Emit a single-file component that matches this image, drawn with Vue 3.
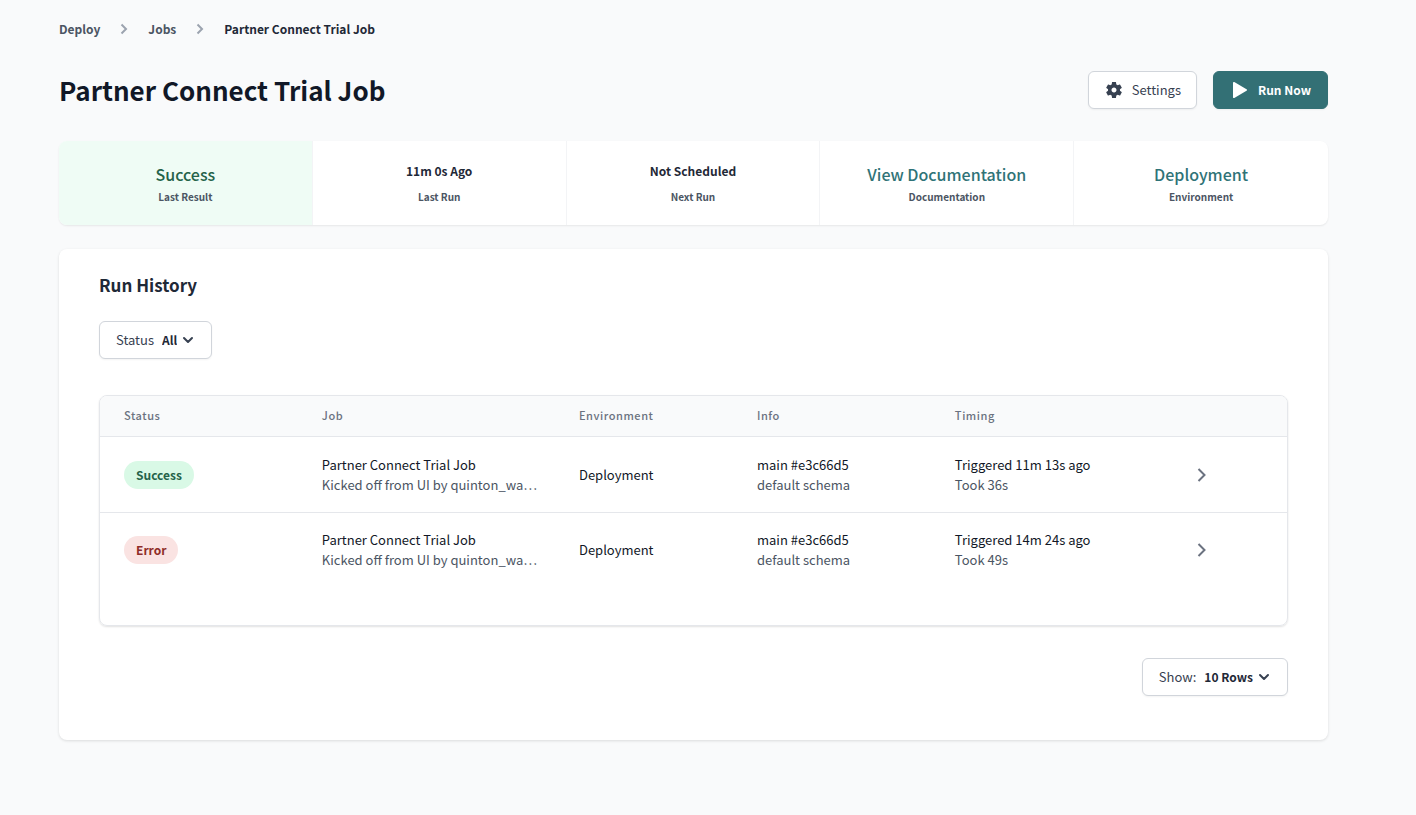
<script setup>
import { ref } from 'vue'

const stats = [
  { value: 'Success', label: 'Last Result', kind: 'success' },
  { value: '11m 0s Ago', label: 'Last Run', kind: 'plain' },
  { value: 'Not Scheduled', label: 'Next Run', kind: 'plain' },
  { value: 'View Documentation', label: 'Documentation', kind: 'link' },
  { value: 'Deployment', label: 'Environment', kind: 'link' },
]

const columns = ['Status', 'Job', 'Environment', 'Info', 'Timing']

const runs = [
  { id: 1, status: 'Success', triggered: 'Triggered 11m 13s ago', took: 'Took 36s' },
  { id: 2, status: 'Error', triggered: 'Triggered 14m 24s ago', took: 'Took 49s' },
]

const status = ref('All')
const rows = ref('10 Rows')
</script>

<template>
  <main class="page">
    <nav class="crumbs" aria-label="Breadcrumb">
      <a href="#">Deploy</a>
      <svg class="crumb-sep" viewBox="0 0 20 20" aria-hidden="true"><path d="M7.500 5.500l4.500 4.500-4.500 4.500" /></svg>
      <a href="#">Jobs</a>
      <svg class="crumb-sep" viewBox="0 0 20 20" aria-hidden="true"><path d="M7.500 5.500l4.500 4.500-4.500 4.500" /></svg>
      <a href="#" class="current" aria-current="page">Partner Connect Trial Job</a>
    </nav>

    <header class="heading">
      <h1>Partner Connect Trial Job</h1>
      <div class="actions">
        <button type="button" class="btn">
          <svg class="btn-icon" viewBox="0 0 24 24" aria-hidden="true"><path d="M19.14 12.94c.04-.3.06-.61.06-.94 0-.32-.02-.64-.07-.94l2.03-1.58c.18-.14.23-.41.12-.61l-1.92-3.32c-.12-.22-.37-.29-.59-.22l-2.39.96c-.5-.38-1.03-.7-1.62-.94l-.36-2.54c-.04-.24-.24-.41-.48-.41h-3.84c-.24 0-.43.17-.47.41l-.36 2.54c-.59.24-1.13.57-1.62.94l-2.39-.96c-.22-.08-.47 0-.59.22L2.74 8.870c-.12.21-.08.47.12.61l2.03 1.58c-.05.3-.09.63-.09.94s.02.64.07.94l-2.030 1.580c-.18.14-.23.41-.12.61l1.920 3.320c.12.22.37.29.59.22l2.390-.960c.5.38 1.030.7 1.620.940l.360 2.540c.050.240.240.410.480.410h3.840c.240 0 .440-.170.470-.410l.360-2.540c.590-.240 1.130-.560 1.620-.940l2.390.960c.220.080.470 0 .590-.220l1.920-3.320c.120-.220.070-.470-.120-.610l-2.010-1.580zM12 15c-1.650 0-3-1.350-3-3s1.350-3 3-3 3 1.350 3 3-1.350 3-3 3z" /></svg>
          Settings
        </button>
        <button type="button" class="btn primary">
          <svg class="btn-icon" viewBox="0 0 20 20" aria-hidden="true"><path d="M3 2.800C3 2 3.700 1.700 4.300 2.100l12.200 7.100c.700.400.700 1.200 0 1.600L4.300 17.900c-.600.400-1.300.100-1.300-.700z" /></svg>
          Run Now
        </button>
      </div>
    </header>

    <section class="stats" aria-label="Job summary">
      <div v-for="s in stats" :key="s.label" class="stat" :class="s.kind">
        <a v-if="s.kind === 'link'" href="#" class="stat-value">{{ s.value }}</a>
        <span v-else class="stat-value">{{ s.value }}</span>
        <span class="stat-label">{{ s.label }}</span>
      </div>
    </section>

    <section class="card">
      <h2>Run History</h2>
      <label class="picker">
        <span>Status</span>
        <select v-model="status">
          <option>All</option>
          <option>Success</option>
          <option>Error</option>
        </select>
        <svg class="caret" viewBox="0 0 12 12" aria-hidden="true"><path d="M2 4l4 4 4-4" /></svg>
      </label>

      <div class="table-box">
        <table>
          <colgroup>
            <col class="c-status" /><col class="c-job" /><col class="c-env" />
            <col class="c-info" /><col class="c-timing" /><col class="c-open" />
          </colgroup>
          <thead>
            <tr>
              <th v-for="c in columns" :key="c" scope="col">{{ c }}</th>
              <th aria-label="Open"></th>
            </tr>
          </thead>
          <tbody>
            <tr v-for="r in runs" :key="r.id">
              <td><span class="badge" :class="r.status.toLowerCase()">{{ r.status }}</span></td>
              <td>
                <div>Partner Connect Trial Job</div>
                <div class="sub">Kicked off from UI by quinton_wa…</div>
              </td>
              <td>Deployment</td>
              <td>
                <div>main #e3c66d5</div>
                <div class="sub">default schema</div>
              </td>
              <td>
                <div>{{ r.triggered }}</div>
                <div class="sub">{{ r.took }}</div>
              </td>
              <td>
                <a href="#" class="open" aria-label="Open run">
                  <svg viewBox="0 0 20 20" aria-hidden="true"><path d="M6.500 4l6 6-6 6" /></svg>
                </a>
              </td>
            </tr>
          </tbody>
        </table>
      </div>

      <div class="pager">
        <label class="picker">
          <span>Show:</span>
          <select v-model="rows">
            <option>10 Rows</option>
            <option>25 Rows</option>
            <option>50 Rows</option>
          </select>
          <svg class="caret" viewBox="0 0 12 12" aria-hidden="true"><path d="M2 4l4 4 4-4" /></svg>
        </label>
      </div>
    </section>
  </main>
</template>

<style>
body {
  background: #f9fafb;
}
</style>

<style scoped>
.page {
  box-sizing: border-box;
  padding: 19px 88px 72px 59px;
  font-family: "Noto Sans CJK SC", "Noto Sans", sans-serif;
  font-size: 13px;
  line-height: 20px;
  color: #111827;
}
a {
  color: inherit;
  text-decoration: none;
}
.crumbs {
  display: flex;
  align-items: center;
  font-size: 12px;
  font-weight: 700;
  color: #4b5563;
}
.crumb-sep {
  width: 20px;
  height: 20px;
  margin: 0 14px;
  fill: none;
  stroke: #9ca3af;
  stroke-width: 2;
}
.current {
  color: #1f2937;
}
.heading {
  display: flex;
  align-items: center;
  justify-content: space-between;
  margin-top: 32px;
}
h1 {
  margin: 0;
  font-size: 26px;
  line-height: 36px;
  font-weight: 700;
}
.actions {
  display: flex;
  gap: 16px;
}
.btn {
  display: flex;
  align-items: center;
  gap: 8px;
  height: 38px;
  padding: 0 15px;
  border: 1px solid #d1d5db;
  border-radius: 6px;
  background: #fff;
  box-shadow: 0 1px 2px rgba(0, 0, 0, 0.05);
  font: inherit;
  color: #374151;
}
.btn-icon {
  width: 20px;
  height: 20px;
  fill: #374151;
}
.primary {
  padding: 0 16px;
  border-color: #337075;
  background: #337075;
  color: #fff;
  font-size: 12px;
  font-weight: 700;
}
.primary .btn-icon {
  fill: #fff;
}
.stats {
  display: grid;
  grid-template-columns: repeat(5, 1fr);
  margin-top: 32px;
  border-radius: 8px;
  background: #fff;
  box-shadow: 0 1px 2px rgba(0, 0, 0, 0.08);
  overflow: hidden;
}
.stat {
  display: flex;
  flex-direction: column;
  align-items: center;
  padding: 19px 8px 20px;
  border-right: 1px solid #f3f4f6;
  font-weight: 700;
}
.stat:last-child {
  border-right: 0;
}
.stat-value {
  height: 29px;
  font-size: 12px;
  line-height: 22px;
  color: #1f2937;
}
.stat.success {
  background: #effcf5;
}
.success .stat-value,
.link .stat-value {
  font-size: 16px;
  line-height: 28px;
  font-weight: 500;
}
.success .stat-value {
  color: #25634a;
}
.link .stat-value {
  color: #2f7377;
}
.stat-label {
  font-size: 10px;
  line-height: 16px;
  color: #4b5563;
}
.card {
  margin-top: 24px;
  padding: 20px 40px 44px;
  border-radius: 8px;
  background: #fff;
  box-shadow: 0 1px 3px rgba(0, 0, 0, 0.12);
}
h2 {
  margin: 0 0 20px;
  font-size: 17px;
  line-height: 32px;
  font-weight: 700;
  color: #1f2937;
}
.picker {
  box-sizing: border-box;
  display: inline-flex;
  align-items: center;
  height: 38px;
  padding: 0 17px 0 16px;
  border: 1px solid #d1d5db;
  border-radius: 6px;
  background: #fff;
  box-shadow: 0 1px 2px rgba(0, 0, 0, 0.05);
  color: #374151;
  vertical-align: top;
}
.picker select {
  appearance: none;
  field-sizing: content;
  margin: 0 5px 0 8px;
  padding: 0;
  border: 0;
  background: none;
  font: inherit;
  font-size: 12px;
  font-weight: 700;
  color: #1f2937;
}
.caret {
  width: 12px;
  height: 12px;
  fill: none;
  stroke: #374151;
  stroke-width: 2;
  stroke-linecap: round;
  stroke-linejoin: round;
}
.table-box {
  margin-top: 36px;
  padding-bottom: 38px;
  border: 1px solid #e5e7eb;
  border-radius: 8px;
  box-shadow: 0 1px 2px rgba(0, 0, 0, 0.12);
  overflow: hidden;
}
table {
  width: 100%;
  table-layout: fixed;
  border-spacing: 0;
}
.c-status,
.c-info {
  width: 16.67%;
}
.c-job {
  width: 21.66%;
}
.c-env {
  width: 15%;
}
.c-timing {
  width: 20%;
}
.c-open {
  width: 10%;
}
th {
  height: 38px;
  padding: 0 24px 2px;
  background: #f9fafb;
  font-size: 11px;
  line-height: 16px;
  font-weight: 500;
  letter-spacing: 0.05em;
  text-align: left;
  color: #6b7280;
}
td {
  padding: 18px 24px 17px;
  border-top: 1px solid #e5e7eb;
  white-space: nowrap;
}
tr:last-child td {
  padding-top: 17px;
}
.sub {
  color: #4b5563;
}
.badge {
  display: inline-block;
  padding: 4px 12px;
  border-radius: 14px;
  font-size: 12px;
  font-weight: 700;
  vertical-align: middle;
}
.badge.success {
  background: #d9f9e6;
  color: #25634a;
}
.badge.error {
  background: #fae3e2;
  color: #8f2d27;
}
.open {
  display: block;
  width: 20px;
  height: 20px;
}
.open svg {
  display: block;
  fill: none;
  stroke: #6b7280;
  stroke-width: 2;
}
.pager {
  display: flex;
  justify-content: flex-end;
  margin-top: 32px;
}
</style>
